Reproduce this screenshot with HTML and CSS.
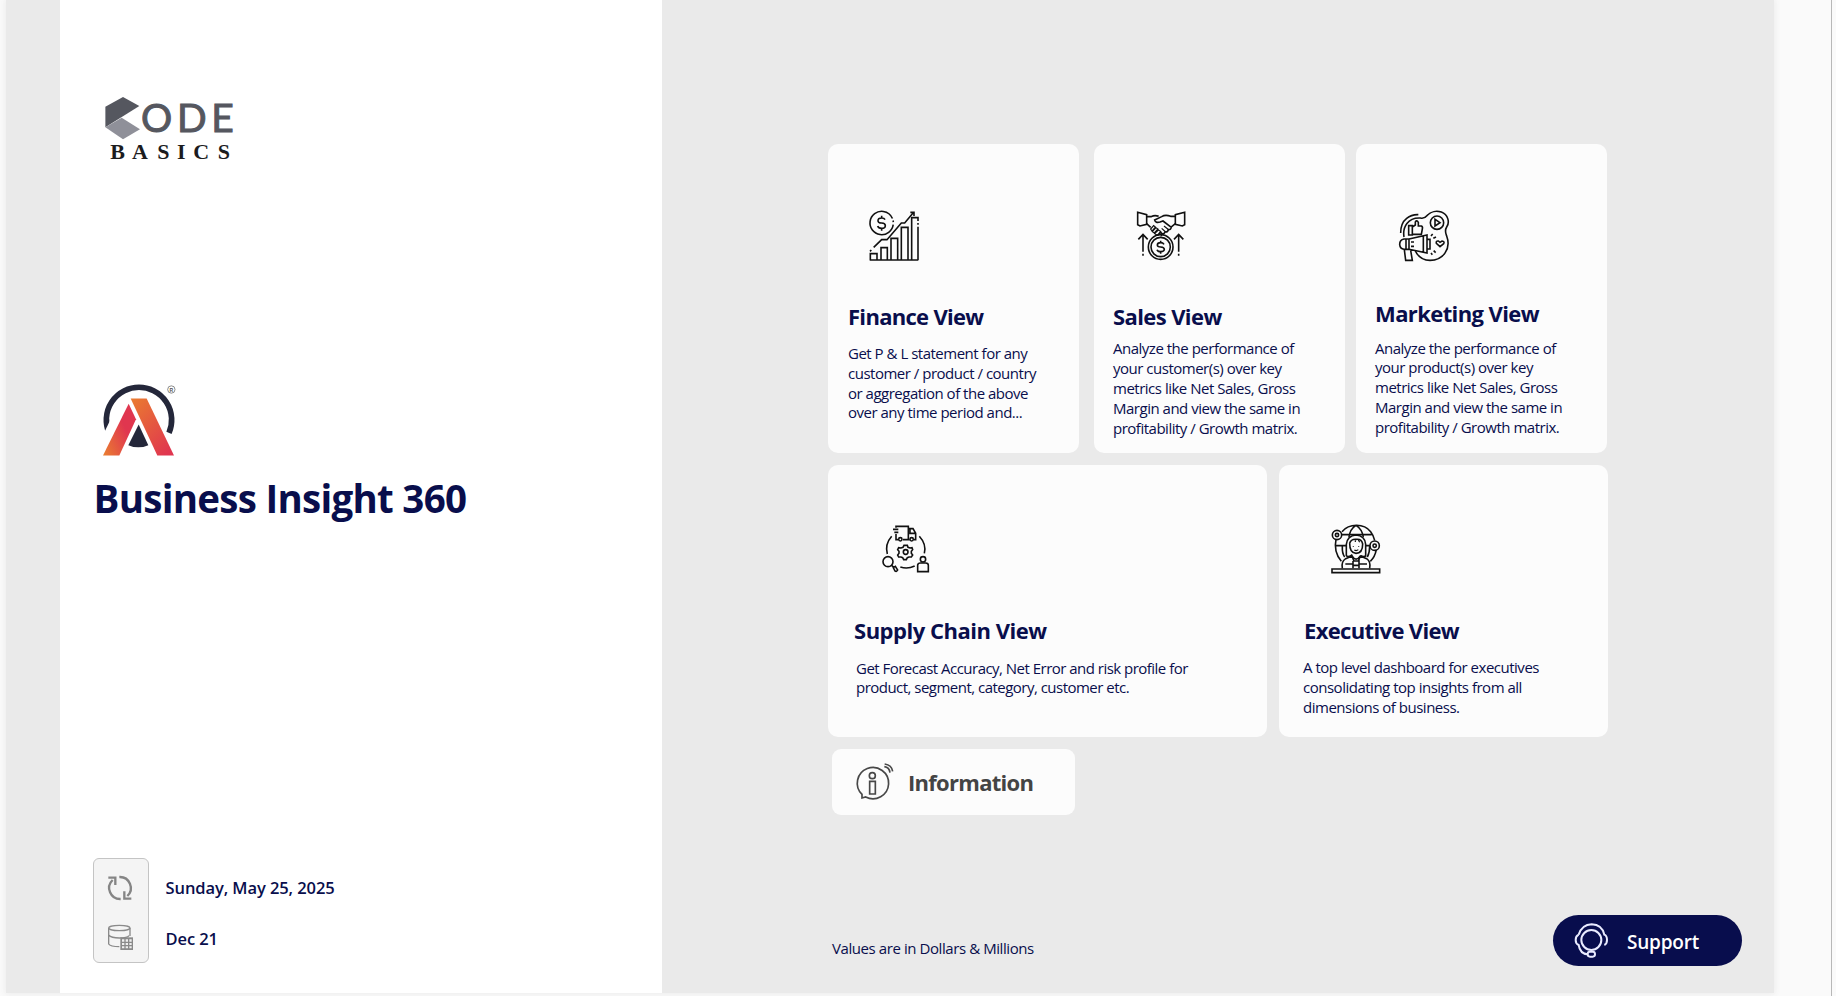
FILE: index.html
```html
<!DOCTYPE html>
<html lang="en">
<head>
<meta charset="utf-8">
<title>Business Insight 360</title>
<link rel="stylesheet" href="styles.css">
</head>
<body>
<div class="report">
  <aside class="panel">
    <svg class="brand" viewBox="40 45 395 195">
      <path d="M100 51 149 78 47 142V80Z" fill="#55575f"/>
      <path d="M96 113 151 148 100 178 47 142Z" fill="#8f9099"/>
      <text class="brand-code" x="154 262 365" y="157">ODE</text>
      <text class="brand-basics" x="62 127 203 262 311 384" y="236">BASICS</text>
    </svg>
    <svg class="atliq" viewBox="66 38 225 224">
      <defs>
        <linearGradient id="legLeft" x1="0" y1="1" x2="1" y2="0.3"><stop offset="0" stop-color="#ea8030"/><stop offset="0.700" stop-color="#e0364f"/></linearGradient>
        <linearGradient id="legRight" x1="0" y1="0" x2="0.8" y2="1"><stop offset="0" stop-color="#ea7c30"/><stop offset="1" stop-color="#e0364f"/></linearGradient>
      </defs>
      <path d="M87 190A98 98 0 1 1 267 190" fill="none" stroke="#24273a" stroke-width="17"/>
      <path d="M122 87H202L290 262H60Z" fill="#fff"/>
      <path d="M110 112 60 215 100 240Z" fill="#fff"/>
      <path d="M146 103 168 149 118 258H69Z" fill="url(#legLeft)"/>
      <path d="M152 87H200L282 258H232Z" fill="url(#legRight)"/>
      <path d="M176 165 205 227Q175 240 145 227Z" fill="#24273a"/>
      <circle cx="274" cy="60" r="11" fill="none" stroke="#555" stroke-width="2"/>
      <text class="reg" x="268.500" y="66">R</text>
    </svg>
    <h1 class="title">Business Insight 360</h1>
    <div class="status">
      <div class="status-icons">
        <svg class="sync" viewBox="82 106 78 78"><g fill="none" stroke="#858585" stroke-width="7"><path d="M123 178A33 33 0 0 1 99 121"/><path d="M119 112A33 33 0 0 1 143 169"/><path d="M86 114H107V136M155 177H134V155"/></g></svg>
        <svg class="db" viewBox="82 254 78 78"><g fill="none" stroke="#8a8a8a" stroke-width="4"><ellipse cx="119" cy="266" rx="32" ry="8"/><path d="M87 266V314Q92 322 119 322M151 266V290M87 287Q95 296 119 296T148 289"/></g><rect x="122" y="294" width="38" height="38" fill="#8a8a8a"/><path d="M127 300h7v7h-7zM138 300h7v7h-7zM149 300h7v7h-7zM127 311h7v6h-7zM138 311h7v6h-7zM149 311h7v6h-7zM127 321h7v6h-7zM138 321h7v6h-7zM149 321h7v6h-7z" fill="#eee"/></svg>
      </div>
      <div class="status-text"><div>Sunday, May 25, 2025</div><div>Dec 21</div></div>
    </div>
  </aside>
  <main class="board">
    <div class="row">
      <section class="card finance">
        <svg class="icon" viewBox="148 228 150 150"><g class="line"><circle cx="186" cy="264" r="35" stroke-dasharray="200 6 5 9" transform="rotate(8 186 264)"/><path d="M196 254Q194 249 186 249 175 249 175 257 175 264 186 264 197 265 197 272 197 280 186 280 176 280 174 273M186 242V249M186 280V287"/><path d="M162 337 186 314H202L245 264H255L282 232M272 232H283V243M151 349l4-4"/><path d="M152 375V356H172V375M184 375V338H203V375M214 375V310H234V375M245 375V277H265V375M276 375V248H295V258M295 264V269M295 275V375M150 375H296"/></g></svg>
        <h2>Finance View</h2>
        <p>Get P &amp; L statement for any<br>customer / product / country<br>or aggregation of the above<br>over any time period and...</p>
      </section>
      <section class="card sales">
        <svg class="icon" viewBox="948 228 150 150"><g class="line"><path d="M953 232 980 239V268L960 273 953 269ZM1094 232 1066 239V268L1087 273 1094 269Z"/><path d="M980 245H994Q1004 239 1016 244M1066 244H1052Q1036 238 1025 245L1004 255Q1007 265 1020 261L1029 258 1054 277M1066 266 1054 276Q1053 285 1045 284 1044 292 1035 291 1032 299 1022 295M980 266 992 277"/><g class="fine"><path d="M992 282 1001 272 1006 276 996 288ZM997 290 1008 278 1014 282 1003 294ZM1004 296 1015 285 1022 289 1012 301ZM1013 302 1023 292 1028 297 1022 304M1032 273 1046 284M1025 280 1037 291"/></g><circle cx="1022" cy="336" r="37"/><circle cx="1022" cy="336" r="29"/><path d="M1032 328Q1029 323 1022 323 1012 323 1012 330 1012 336 1022 336 1033 337 1033 343 1033 350 1022 350 1013 350 1011 344M1022 317V323M1022 350V356"/><path d="M969 350V299M955 313 969 298 983 313M1076 350V299M1062 313 1076 298 1090 313M969 356V362M1076 356V362"/></g></svg>
        <h2>Sales View</h2>
        <p>Analyze the performance of<br>your customer(s) over key<br>metrics like Net Sales, Gross<br>Margin and view the same in<br>profitability / Growth matrix.</p>
      </section>
      <section class="card marketing">
        <svg class="icon" viewBox="597 228 150 150"><g class="line"><path d="M612 306C607 276 624 247 661 249C674 252 678 246 682 241C692 229 710 227 724 231C744 238 750 262 740 276C733 287 737 295 740 303C754 341 730 376 690 376C668 376 654 364 646 348"/><path d="M602 294Q602 264 620 250 635 238 655 239"/><circle cx="711" cy="263" r="20"/><path d="M705 253V273L720 263Z"/><path d="M626 272H637V300H626ZM637 276 646 270V261Q650 254 655 262V273H664Q669 275 667 282L664 298H637"/><path d="M627 312H612Q599 315 599 328 600 341 612 343H627ZM618 312V343M627 312 681 300V354L627 343M670 303V351M682 313H690V342H682M613 344 617 376H637L632 346M642 321H633M642 334H633"/><path d="M720 335 709 325Q707 317 715 318L720 322 726 318Q735 319 731 326ZM693 303 698 297M700 310 708 306M693 354 697 359M701 347 707 353"/></g></svg>
        <h2>Marketing View</h2>
        <p>Analyze the performance of<br>your product(s) over key<br>metrics like Net Sales, Gross<br>Margin and view the same in<br>profitability / Growth matrix.</p>
      </section>
    </div>
    <div class="row second">
      <section class="card supply">
        <svg class="icon" viewBox="183 207 150 150"><g class="line"><path d="M228 218V214H265V254H249M234 254H228V237M265 221H279L287 235V254H282M269 254H265M270 221V235H287M219 223H235M223 232H235"/><circle cx="241" cy="253" r="5"/><circle cx="275" cy="253" r="5"/><path d="M215 244Q194 268 202 297M298 244Q320 268 313 295M241 336Q263 343 284 333"/><circle cx="257" cy="291" r="7"/><path d="M252 271h10l2 6 6 2 6-1 2 6-4 5v6l4 5-4 6-7 0-5 2-3 6h-8l-3-6-5-2-7 0-3-6 4-5v-6l-4-5 3-6 7 1 6-2Z"/><circle cx="204" cy="320" r="15"/><path d="M215 331 222 338M220 338 226 334 233 345Q230 351 225 348Z"/><circle cx="309" cy="313" r="8"/><path d="M293 350V330Q294 324 301 324H317Q325 324 325 331V350Z"/></g></svg>
        <h2>Supply Chain View</h2>
        <p>Get Forecast Accuracy, Net Error and risk profile for<br>product, segment, category, customer etc.</p>
      </section>
      <section class="card executive">
        <svg class="icon" viewBox="211 207 150 150"><g class="line"><path d="M244 230C266 204 310 205 330 230Q338 240 342 256M226 253Q218 290 242 319M347 284Q343 306 329 319M243 239H333M286 211Q268 222 265 246M286 211Q304 222 308 246M226 272H256M315 272H328M245 274Q244 296 252 306M327 274Q327 294 320 306"/><circle cx="229" cy="240" r="14"/><circle cx="229" cy="240" r="5"/><circle cx="342" cy="272" r="14"/><circle cx="342" cy="272" r="5"/><path d="M257 303V268Q260 242 286 240 313 242 315 268V303Q309 307 300 302M257 303Q266 307 275 299M267 265Q267 295 286 295 306 295 306 267 303 251 286 253 271 252 267 265"/><g class="fine"><path d="M284 256V261M293 255 297 262M278 273V275M294 273V275M281 285Q287 289 293 284"/></g><path d="M245 340Q241 320 255 311L274 303Q286 322 299 303L318 311Q331 320 327 340M254 327H277M296 327H319M277 318H295V340M277 318V340M274 303 280 319M299 303 293 319M277 331H295"/><path d="M214 342H357V353H214Z"/></g></svg>
        <h2>Executive View</h2>
        <p>A top level dashboard for executives<br>consolidating top insights from all<br>dimensions of business.</p>
      </section>
    </div>
    <div class="info">
      <svg class="info-icon" viewBox="106 922 120 120"><g fill="none" stroke="#484848" stroke-width="5"><path d="M127 1017V1030L138 1027A47 47 0 1 0 127 1019"/><circle cx="158" cy="963" r="9"/><path d="M150 980H167V1018H150ZM194 936Q209 938 211 954M195 928Q216 931 219 950"/></g></svg>
      <span class="info-label">Information</span>
    </div>
    <footer class="foot">
      <span class="note">Values are in Dollars &amp; Millions</span>
      <div class="support">
        <svg class="headset" viewBox="222 127 105 105"><g fill="none" stroke="#e9ebff" stroke-width="6"><circle cx="274" cy="178" r="30"/><path d="M236 162Q246 132 275 131 306 132 313 162Q321 165 321 178 321 190 313 193M236 162Q227 166 227 178 227 190 236 193Q240 219 263 221"/><rect x="263" y="213" width="22" height="15" rx="7"/></g></svg>
        <span class="support-label">Support</span>
      </div>
    </footer>
  </main>
</div>
</body>
</html>
```
FILE: styles.css
```css
* { box-sizing: border-box; }
body { margin: 0; height: 996px; overflow: hidden; background: #fafafa; font-family: "Open Sans", "Noto Sans", sans-serif; color: #090e4c; border-right: 4px solid #fafafa; box-shadow: inset -1px 0 0 #b8b8b8; }
h1, h2, p { margin: 0; white-space: nowrap; }
svg { display: block; overflow: visible; }
.report { display: flex; height: 993px; width: 1768px; margin-left: 6px; padding-left: 54px; background: #eaeaea; box-shadow: 0 0 6px 1px #ececec; }
.panel { width: 602px; background: #fff; padding: 95px 0 0 33px; }
.brand { width: 131.700px; height: 65px; margin-left: 10px; }
.brand-code { font: 117px Lato, sans-serif; fill: #55575f; stroke: #55575f; stroke-width: 3px; }
.brand-basics { font: bold 66px "Liberation Serif", serif; fill: #1c1c1e; }
.atliq { width: 75px; height: 75px; margin: 221.500px 0 0 9px; }
.reg { font: bold 15px "Liberation Sans", sans-serif; fill: #555; }
.title { font-size: 38.500px; line-height: 50px; margin: 16px 0 0 0.500px; font-weight: 700; letter-spacing: -0.720px; }
.status { display: flex; margin-top: 335px; gap: 17px; }
.status-icons { width: 56px; height: 105px; border: 1px solid #c4c4c4; border-radius: 6px; background: #f4f4f4; padding: 16px 0 0 13px; }
.sync { width: 26px; height: 26px; }
.db { width: 26px; height: 26px; margin-top: 23px; }
.status-text { font-size: 16.500px; font-weight: 600; line-height: 24px; padding-top: 18px; margin-left: -0.500px; letter-spacing: -0.080px; }
.status-text div + div { margin-top: 27px; }
.board { flex: 1; padding: 144px 0 0 166px; }
.row { display: flex; height: 309px; }
.second { margin-top: 12px; height: 272px; }
.card { border-radius: 10px; background: #fcfcfc; width: 251px; }
.sales { margin-left: 15px; }
.marketing { margin-left: 11px; }
.supply { width: 439px; }
.executive { width: 329px; margin-left: 12px; }
.icon { width: 50px; height: 50px; margin-left: 20px; }
.line { fill: none; stroke: #111; stroke-width: 4.800px; }
.fine { stroke-width: 3.500px; }
h2 { font-size: 22px; line-height: 28px; }
p { font-size: 15px; line-height: 19.800px; letter-spacing: -0.490px; }
.finance { padding: 67px 0 0 20px; }
.finance .icon { margin-left: 21px; }
.finance h2 { margin-top: 40.500px; letter-spacing: -0.700px; }
.finance p { margin-top: 14.500px; }
.sales { padding: 67px 0 0 19px; }
.sales .icon { margin-left: 23px; }
.sales h2 { margin-top: 40.500px; letter-spacing: -0.600px; }
.sales p { margin-top: 8px; line-height: 20px; }
.marketing { padding: 67px 0 0 19px; }
.marketing .icon { margin-left: 24px; }
.marketing h2 { margin-top: 37.500px; letter-spacing: -0.600px; }
.marketing p { margin-top: 12px; }
.supply { padding: 59px 0 0 26px; }
.supply .icon { margin-left: 27px; }
.supply h2, .executive h2 { margin-top: 41.500px; }
.supply h2 { letter-spacing: -0.480px; }
.executive h2 { letter-spacing: -0.650px; }
.supply p { margin: 15px 0 0 2px; letter-spacing: -0.520px; }
.executive { padding: 59px 0 0 25px; }
.executive .icon { margin-left: 26.500px; }
.executive p { margin: 13px 0 0 -1px; line-height: 20px; }
.info { display: flex; align-items: center; width: 243px; height: 66px; margin: 12px 0 0 4px; padding-left: 23px; border-radius: 9px; background: #fcfcfc; }
.info-icon { width: 40px; height: 40px; }
.info-label { margin-left: 13px; font-size: 22px; font-weight: 700; color: #444; letter-spacing: -0.720px; }
.foot { display: flex; margin: 100px 0 0 4px; }
.note { width: 721px; font-size: 15px; line-height: 20px; margin-top: 23px; letter-spacing: -0.420px; }
.support { display: flex; align-items: center; width: 189px; height: 51px; border-radius: 26px; background: #080d4d; padding-left: 21px; color: #fff; }
.headset { width: 35px; height: 35px; }
.support-label { margin: 2px 0 0 18px; font-size: 19px; font-weight: 600; letter-spacing: -0.200px; }
```
